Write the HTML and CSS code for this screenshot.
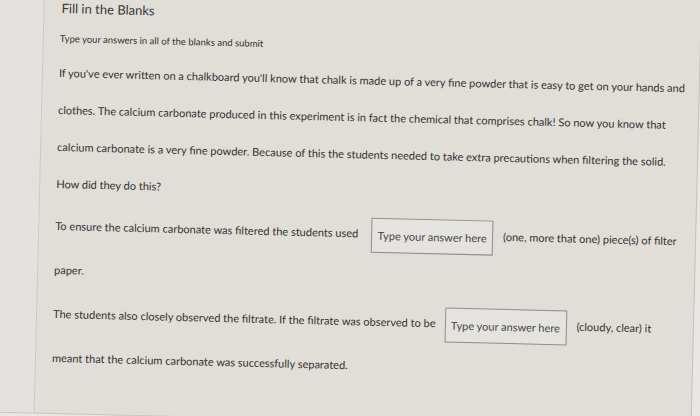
FILE: index.html
```html
<!DOCTYPE html>
<html lang="en">
<head>
<meta charset="utf-8">
<title>Fill in the Blanks</title>
<link rel="stylesheet" href="styles.css">
</head>
<body>
<div class="screen">
  <div class="page">
    <div class="gutter"></div>
    <main class="content">
      <h1 class="title">Fill in the Blanks</h1>
      <p class="instr">Type your answers in all of the blanks and submit</p>
      <p class="para">If you've ever written on a chalkboard you'll know that chalk is made up of a very fine powder that is easy to get on your hands and<br>clothes. The calcium carbonate produced in this experiment is in fact the chemical that comprises chalk! So now you know that<br>calcium carbonate is a very fine powder. Because of this the students needed to take extra precautions when filtering the solid.<br>How did they do this?</p>
      <p class="row row-one">To ensure the calcium carbonate was filtered the students used<span class="blank">Type your answer here</span>(one, more that one) piece(s) of filter<br>paper.</p>
      <p class="row row-two">The students also closely observed the filtrate. If the filtrate was observed to be<span class="blank">Type your answer here</span>(cloudy, clear) it<br>meant that the calcium carbonate was successfully separated.</p>
    </main>
  </div>
</div>
</body>
</html>
```

FILE: styles.css
```css
* { box-sizing: border-box; }

html, body {
  margin: 0;
  padding: 0;
  background: #e9e7e3;
}

.screen {
  width: 700px;
  height: 416px;
  overflow: hidden;
  background: #e9e7e3;
}

.page {
  width: 740px;
  height: 434px;
  margin-left: -40px;
  margin-top: -20px;
  display: flex;
  background: #e1ded8;
  border-right: 1px solid #c4c1bb;
  border-bottom: 1px solid #c8c5bf;
  transform: rotate(1.4deg);
  transform-origin: 100px 92px;
  font-family: Lato, "Liberation Sans", sans-serif;
  color: #323130;
}

.gutter {
  width: 83px;
  flex: none;
  background: #e3e1dd;
  border-right: 1px solid #cdcac4;
}

.content {
  flex: 1;
  padding: 20px 0 0 16px;
}

.title {
  margin: 0;
  font-size: 13px;
  font-weight: 400;
  line-height: 16px;
  color: #373635;
  padding-left: 1px;
}

.instr {
  margin: 16px 0 0;
  font-size: 9.5px;
  line-height: 14px;
}

.para {
  margin: 7.5px 0 0;
  font-size: 11px;
  line-height: 37px;
  white-space: nowrap;
}

.row {
  margin: 0;
  font-size: 11px;
  line-height: 44px;
  white-space: nowrap;
}

.row-one { margin-top: 2.5px; }

.blank {
  display: inline-block;
  vertical-align: middle;
  width: 122px;
  height: 35px;
  margin: 0 10px 0 13px;
  border: 1px solid #8e8c88;
  background: #e5e3df;
  color: #464544;
  line-height: 33px;
  text-align: center;
}

.row-two .blank {
  margin-left: 9px;
}
```
